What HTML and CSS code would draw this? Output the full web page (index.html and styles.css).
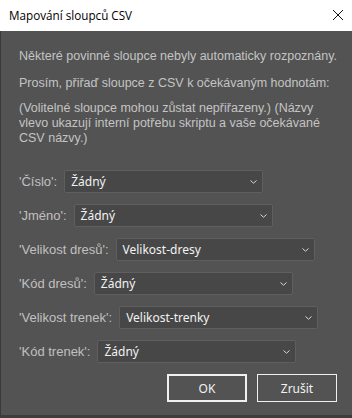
FILE: index.html
```html
<!DOCTYPE html>
<html lang="cs">
<head>
<meta charset="utf-8">
<title>Mapování sloupců CSV</title>
<link rel="stylesheet" href="styles.css">
</head>
<body>
<div class="window">
  <div class="titlebar">
    <span class="title">Mapování sloupců CSV</span>
    <svg class="close" width="12" height="12" viewBox="0 0 12 12"><path d="M1 1 L11 11 M11 1 L1 11" stroke="#111" stroke-width="1" fill="none"/></svg>
  </div>
  <div class="content">
    <p class="msg first">Některé povinné sloupce nebyly automaticky rozpoznány.</p>
    <p class="msg second">Prosím, přiřaď sloupce z CSV k očekávaným hodnotám:</p>
    <p class="msg third">(Volitelné sloupce mohou zůstat nepřiřazeny.) (Názvy vlevo ukazují interní potřebu skriptu a vaše očekávané CSV názvy.)</p>
    <div class="rows">
      <div class="row"><span class="label">'Číslo':</span><div class="select"><span>Žádný</span><svg class="chev" width="7" height="4" viewBox="0 0 7 4"><path d="M0.5 0.5 L3.5 3.2 L6.5 0.5" stroke="#d8d8d8" fill="none"/></svg></div></div>
      <div class="row"><span class="label">'Jméno':</span><div class="select"><span>Žádný</span><svg class="chev" width="7" height="4" viewBox="0 0 7 4"><path d="M0.5 0.5 L3.5 3.2 L6.5 0.5" stroke="#d8d8d8" fill="none"/></svg></div></div>
      <div class="row"><span class="label">'Velikost dresů':</span><div class="select"><span>Velikost-dresy</span><svg class="chev" width="7" height="4" viewBox="0 0 7 4"><path d="M0.5 0.5 L3.5 3.2 L6.5 0.5" stroke="#d8d8d8" fill="none"/></svg></div></div>
      <div class="row"><span class="label">'Kód dresů':</span><div class="select"><span>Žádný</span><svg class="chev" width="7" height="4" viewBox="0 0 7 4"><path d="M0.5 0.5 L3.5 3.2 L6.5 0.5" stroke="#d8d8d8" fill="none"/></svg></div></div>
      <div class="row"><span class="label">'Velikost trenek':</span><div class="select"><span>Velikost-trenky</span><svg class="chev" width="7" height="4" viewBox="0 0 7 4"><path d="M0.5 0.5 L3.5 3.2 L6.5 0.5" stroke="#d8d8d8" fill="none"/></svg></div></div>
      <div class="row"><span class="label">'Kód trenek':</span><div class="select"><span>Žádný</span><svg class="chev" width="7" height="4" viewBox="0 0 7 4"><path d="M0.5 0.5 L3.5 3.2 L6.5 0.5" stroke="#d8d8d8" fill="none"/></svg></div></div>
    </div>
    <div class="buttons">
      <button class="btn default">OK</button>
      <button class="btn">Zrušit</button>
    </div>
  </div>
</div>
</body>
</html>
```
FILE: styles.css
```css
html, body {
  margin: 0;
  padding: 0;
  width: 352px;
  height: 418px;
  overflow: hidden;
  background: #535353;
}
.window {
  width: 352px;
  height: 418px;
  display: flex;
  flex-direction: column;
  font-family: "Liberation Sans", Arial, sans-serif;
}
.titlebar {
  flex: 0 0 31px;
  height: 31px;
  background: #ffffff;
  display: flex;
  align-items: center;
  justify-content: space-between;
  padding: 0 9px 0 9px;
  box-sizing: border-box;
}
.title {
  font-family: "Open Sans", "Noto Sans", sans-serif;
  font-size: 11.7px;
  color: #000;
  margin-top: -2px;
}
.close {
  margin-right: -1px;
  margin-top: -2px;
}
.content {
  flex: 1;
  min-height: 0;
  background: #535353;
  border-left: 1px solid #3a3a3a;
  border-bottom: 3px solid #3c3c3c;
  padding: 18px 15px 0 18px;
  display: flex;
  flex-direction: column;
}
.msg {
  margin: 0 -12px 0 0;
  font-size: 12.5px;
  line-height: 15px;
  color: #c4c4c4;
}
.second { margin-top: 12px; }
.third { margin-top: 10px; margin-right: -2px; }
.rows {
  margin-top: 24px;
  display: flex;
  flex-direction: column;
  gap: 11px;
}
.row {
  display: flex;
  align-items: center;
  gap: 7px;
  height: 23px;
}
.label {
  font-size: 13px;
  color: #c0c0c0;
}
.select {
  width: 199px;
  height: 23px;
  box-sizing: border-box;
  background: #474747;
  border: 1px solid #5f5f5f;
  border-radius: 2px;
  display: flex;
  align-items: center;
  justify-content: space-between;
  padding: 0 5px 0 6px;
  font-family: "Noto Sans", "Open Sans", sans-serif;
  font-size: 12px;
  color: #f2f2f2;
}
.chev { margin-top: 1px; }
.buttons {
  margin-top: 11px;
  display: flex;
  justify-content: flex-end;
  gap: 10px;
}
.btn {
  width: 80px;
  height: 28px;
  box-sizing: border-box;
  background: #535353;
  border: 1px solid #f0f0f0;
  color: #f2f2f2;
  font-family: "Noto Sans", "Open Sans", sans-serif;
  font-size: 12px;
  padding: 0;
}
.btn.default { border-width: 2px; }
```
